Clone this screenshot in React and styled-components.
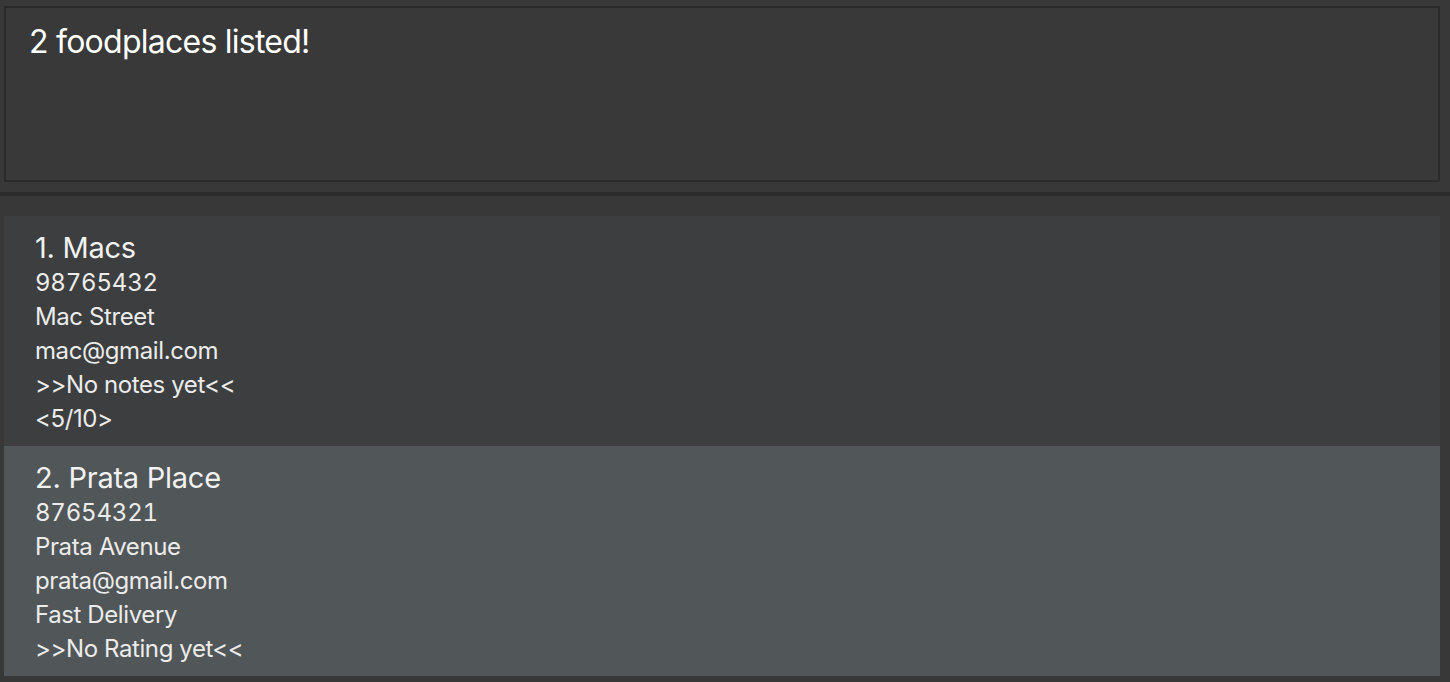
import React from "react";
import styled, { createGlobalStyle } from "styled-components";

const GlobalStyle = createGlobalStyle`
  html, body {
    margin: 0;
    padding: 0;
    background: #383838;
  }
  body {
    font-family: Inter, "Noto Sans", "Liberation Sans", sans-serif;
    -webkit-font-smoothing: antialiased;
  }
`;

const Page = styled.div`
  width: 1450px;
  height: 682px;
  display: flex;
  flex-direction: column;
  background: #383838;
  overflow: hidden;
`;

const ResultPane = styled.div`
  padding: 6px 10px 10px 4px;
`;

const ResultBox = styled.div`
  border: 2px solid #2b2b2b;
  background: #393939;
  padding: 14px 23px;
  box-sizing: border-box;
  height: 176px;
  color: #ffffff;
  font-size: 32px;
  line-height: 40px;
  letter-spacing: -0.75px;
`;

const Divider = styled.div`
  height: 4px;
  background: #2b2b2b;
`;

const ListPane = styled.div`
  flex: 1;
  padding: 20px 10px 6px 4px;
  display: flex;
  flex-direction: column;
`;

const Card = styled.div`
  background: ${(p) => (p.$selected ? "#515658" : "#3c3e3f")};
  padding: 14px 31px 9px;
  height: 230px;
  box-sizing: border-box;
  display: flex;
  flex-direction: column;
`;

const Title = styled.div`
  color: #f2f2f2;
  font-size: 29px;
  line-height: 36px;
  letter-spacing: -0.25px;
`;

const Detail = styled.div`
  color: #ececec;
  font-size: 24px;
  line-height: 34px;
  letter-spacing: ${(p) => (p.$numeric ? "-0.2px" : "-0.4px")};
  font-variant-numeric: ${(p) => (p.$numeric ? "tabular-nums" : "normal")};
`;

const places = [
  {
    name: "Macs",
    phone: "98765432",
    address: "Mac Street",
    email: "mac@gmail.com",
    note: ">>No notes yet<<",
    rating: "<5/10>",
  },
  {
    name: "Prata Place",
    phone: "87654321",
    address: "Prata Avenue",
    email: "prata@gmail.com",
    note: "Fast Delivery",
    rating: ">>No Rating yet<<",
  },
];

export default function App() {
  return (
    <>
      <GlobalStyle />
      <Page>
        <ResultPane>
          <ResultBox>2 foodplaces listed!</ResultBox>
        </ResultPane>
        <Divider />
        <ListPane>
          {places.map((p, i) => (
            <Card key={p.name} $selected={i === 1}>
              <Title>
                {i + 1}. {p.name}
              </Title>
              <Detail $numeric>{p.phone}</Detail>
              <Detail>{p.address}</Detail>
              <Detail>{p.email}</Detail>
              <Detail>{p.note}</Detail>
              <Detail>{p.rating}</Detail>
            </Card>
          ))}
        </ListPane>
      </Page>
    </>
  );
}
